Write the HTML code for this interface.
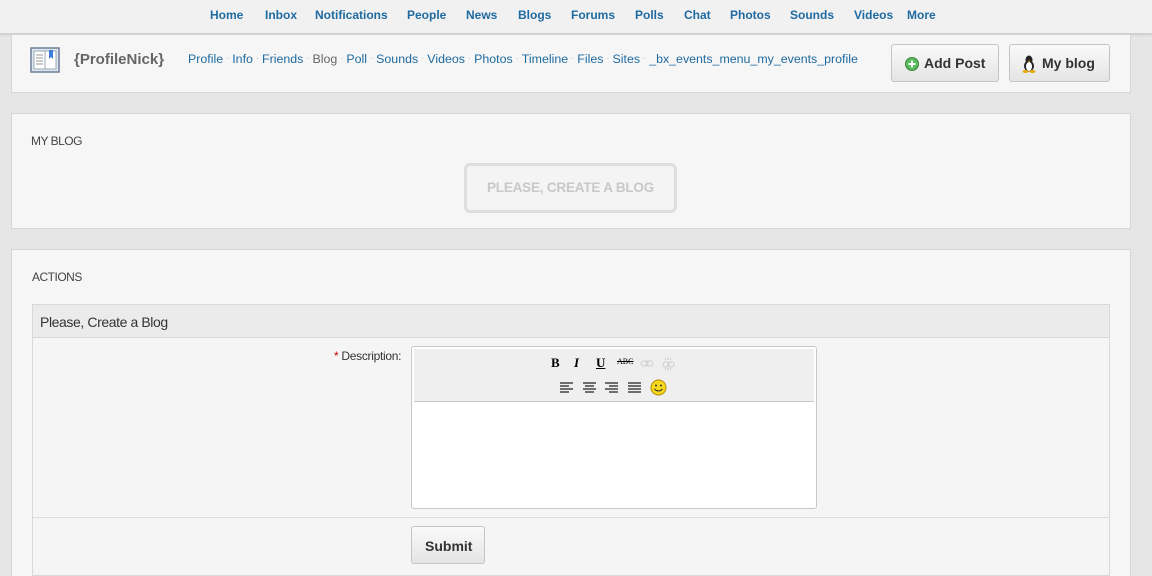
<!DOCTYPE html>
<html><head><meta charset="utf-8"><style>
*{box-sizing:border-box;margin:0;padding:0}
html{width:1152px;height:576px;overflow:hidden}
body{width:1152px;height:576px;overflow:hidden;background:#e6e6e6;font-family:"Liberation Sans",Arial,sans-serif;position:relative}
.a{position:absolute;white-space:nowrap}
.top{position:absolute;left:0;top:0;width:1152px;height:34px;background:#f1f1f1;border-bottom:1px solid #cfcfcf;box-shadow:0 1px 2px rgba(0,0,0,.12)}
.nav{font-size:12px;font-weight:bold;color:#1f6aa0;top:8px}
.box{position:absolute;left:11px;width:1120px;background:#f6f6f6;border:1px solid #d6d6d6}
.sub{font-size:12.4px;color:#1f6aa0;top:52px;left:188px}
.sub i{font-style:normal;color:#aaa;font-size:8px;margin:0 1px;vertical-align:2px}
.btn{position:absolute;border:1px solid #c4c4c4;border-radius:3px;background:linear-gradient(#fafafa,#e4e4e4);font-weight:bold;font-size:14px;color:#333}
.ttl{font-size:12px;color:#444;letter-spacing:-0.5px}
</style></head><body>
<div class="top"></div>
<span class="a nav" style="left:210px">Home</span>
<span class="a nav" style="left:265px">Inbox</span>
<span class="a nav" style="left:315px">Notifications</span>
<span class="a nav" style="left:407px">People</span>
<span class="a nav" style="left:466px">News</span>
<span class="a nav" style="left:518px">Blogs</span>
<span class="a nav" style="left:571px">Forums</span>
<span class="a nav" style="left:635px">Polls</span>
<span class="a nav" style="left:684px">Chat</span>
<span class="a nav" style="left:730px">Photos</span>
<span class="a nav" style="left:790px">Sounds</span>
<span class="a nav" style="left:854px">Videos</span>
<span class="a nav" style="left:907px">More</span>

<div class="box" style="top:35px;height:58px;border-top:none"></div>
<svg class="a" style="left:30px;top:47px" width="30" height="26" viewBox="0 0 30 26"><rect x="1" y="1" width="28" height="24" fill="#dfe6ee" stroke="#6b7f99" stroke-width="1.5"/><rect x="4" y="4" width="22" height="18" fill="#fff" stroke="#9aa8ba"/><line x1="15" y1="4" x2="15" y2="22" stroke="#9aa8ba"/><g stroke="#999"><line x1="6" y1="8" x2="13" y2="8"/><line x1="6" y1="11" x2="13" y2="11"/><line x1="6" y1="14" x2="13" y2="14"/><line x1="6" y1="17" x2="13" y2="17"/></g><path d="M19 3h4v9l-2-2-2 2z" fill="#3b7dd8"/></svg>
<span class="a" style="left:74px;top:51px;font-size:15px;font-weight:bold;color:#666">{ProfileNick}</span>
<span class="a sub">Profile<i> · </i>Info<i> · </i>Friends<i> · </i><span style="color:#666">Blog</span><i> · </i>Poll<i> · </i>Sounds<i> · </i>Videos<i> · </i>Photos<i> · </i>Timeline<i> · </i>Files<i> · </i>Sites<i> · </i>_bx_events_menu_my_events_profile</span>
<div class="btn" style="left:891px;top:44px;width:108px;height:38px"><svg class="a" style="left:13px;top:12px" width="14" height="14"><circle cx="7" cy="7" r="6.5" fill="#5cb85c" stroke="#3d8b3d"/><path d="M7 3.5v7M3.5 7h7" stroke="#fff" stroke-width="2"/></svg><span class="a" style="left:32px;top:10px">Add Post</span></div>
<div class="btn" style="left:1009px;top:44px;width:101px;height:38px"><svg class="a" style="left:12px;top:10px" width="14" height="18" viewBox="0 0 14 18"><ellipse cx="7" cy="5" rx="3.5" ry="4.5" fill="#222"/><ellipse cx="7" cy="11" rx="5" ry="5.5" fill="#222"/><ellipse cx="7" cy="11.5" rx="3" ry="4.5" fill="#fff"/><ellipse cx="3.5" cy="16.5" rx="3" ry="1.5" fill="#e8a800"/><ellipse cx="10.5" cy="16.5" rx="3" ry="1.5" fill="#e8a800"/><path d="M5.5 6l1.5 1 1.5-1-1.5-.5z" fill="#e8a800"/></svg><span class="a" style="left:32px;top:10px">My blog</span></div>

<div class="box" style="top:113px;height:116px"></div>
<span class="a ttl" style="left:31px;top:134px">MY BLOG</span>
<div class="a" style="left:464px;top:163px;width:213px;height:50px;border:3px solid #dedede;border-radius:6px;background:#f4f4f4;color:#c8c8c8;font-weight:bold;font-size:13.5px;text-align:center;line-height:44px;letter-spacing:-0.2px">PLEASE, CREATE A BLOG</div>

<div class="box" style="top:249px;height:340px"></div>
<span class="a ttl" style="left:32px;top:270px">ACTIONS</span>
<div class="a" style="left:32px;top:304px;width:1078px;height:272px;border:1px solid #d8d8d8;background:#f5f5f5"></div>
<div class="a" style="left:32px;top:304px;width:1078px;height:34px;background:#ebebeb;border:1px solid #d8d8d8"></div>
<span class="a" style="left:40px;top:314px;font-size:14px;color:#333;letter-spacing:-0.4px">Please, Create a Blog</span>
<span class="a" style="left:334px;top:349px;font-size:12px;color:#333;letter-spacing:-0.3px"><span style="color:#c00">*</span> Description:</span>
<div class="a" style="left:411px;top:346px;width:406px;height:163px;border:1px solid #c8c8c8;border-radius:3px;background:#fff"></div>
<div class="a" style="left:414px;top:349px;width:400px;height:53px;background:#efefef;border-bottom:1px solid #c8c8c8"></div>
<span class="a" style="left:551px;top:355px;font:bold 13px 'Liberation Serif',serif">B</span>
<span class="a" style="left:574px;top:355px;font:bold italic 13px 'Liberation Serif',serif">I</span>
<span class="a" style="left:596px;top:355px;font:bold 13px 'Liberation Serif',serif;text-decoration:underline">U</span>
<span class="a" style="left:617px;top:357px;font:8px 'Liberation Serif',serif;text-decoration:line-through">ABC</span>
<svg class="a" style="left:640px;top:357px" width="40" height="14"><g stroke="#ccc" fill="none"><rect x="1" y="4" width="7" height="5" rx="2.5"/><rect x="6" y="4" width="7" height="5" rx="2.5"/><rect x="23" y="5" width="6" height="5" rx="2.5"/><rect x="28" y="5" width="6" height="5" rx="2.5"/><path d="M28 0v3M25 1l1 2M31 1l-1 2M28 11v3M25 13l1-2M31 13l-1-2"/></g></svg>
<svg class="a" style="left:559px;top:381px" width="90" height="14"><g stroke="#222" stroke-width="1.2"><path d="M1 2h13M1 5h9M1 8h13M1 11h9"/><path d="M24 2h13M26 5h9M24 8h13M26 11h9"/><path d="M46 2h13M50 5h9M46 8h13M50 11h9"/><path d="M69 2h13M69 5h13M69 8h13M69 11h13"/></g></svg>
<svg class="a" style="left:650px;top:379px" width="17" height="17"><circle cx="8.5" cy="8.5" r="7.5" fill="#f7d81c" stroke="#b58b00"/><circle cx="6" cy="6.5" r="1" fill="#333"/><circle cx="11" cy="6.5" r="1" fill="#333"/><path d="M4.5 10q4 4 8 0" stroke="#333" fill="none"/></svg>
<div class="a" style="left:33px;top:517px;width:1076px;height:1px;background:#dcdcdc"></div>
<div class="btn" style="left:411px;top:526px;width:74px;height:38px"><span class="a" style="left:13px;top:11px">Submit</span></div>
</body></html>
